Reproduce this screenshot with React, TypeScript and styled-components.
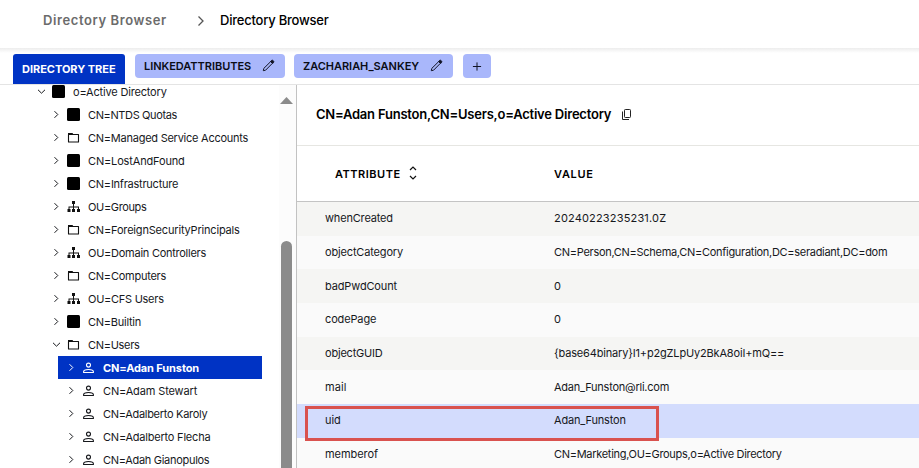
import React from 'react';
import styled, { createGlobalStyle } from 'styled-components';

const Global = createGlobalStyle`
  * { box-sizing: border-box; }
  body { margin: 0; background: #fff; overflow: hidden; }
`;

const Page = styled.div`
  width: 919px;
  height: 468px;
  display: flex;
  flex-direction: column;
  overflow: hidden;
  background: #fff;
  color: #16181c;
  font: 400 11px/16px Inter, "Liberation Sans", sans-serif;
`;

const Text = styled.span<{ $track?: number }>`
  white-space: nowrap;
  letter-spacing: ${p => p.$track ?? -0.2}px;
`;

const Header = styled.header`
  flex: none;
  height: 48px;
  padding: 0 0 8px 43px;
  display: flex;
  align-items: center;
`;

const Crumb = styled.a<{ $current?: boolean }>`
  width: ${p => (p.$current ? 'auto' : '154px')};
  font-size: 13px;
  font-weight: ${p => (p.$current ? 500 : 600)};
  color: ${p => (p.$current ? '#000' : '#6b6b6b')};
  letter-spacing: ${p => (p.$current ? -0.22 : 0.6)}px;
  white-space: nowrap;
`;

const CrumbArrow = styled.svg`
  width: 8px;
  height: 12px;
  margin: 2px 15px 0 0;
`;

const TabBar = styled.nav`
  flex: none;
  height: 37px;
  padding: 6px 0 0 13px;
  display: flex;
  align-items: flex-start;
  background: linear-gradient(#ededed, #fff 5px);
  border-bottom: 1px solid #e4e4e4;
`;

const Tab = styled.button<{ $active?: boolean; $width: number; $gap?: number }>`
  width: ${p => p.$width}px;
  height: ${p => (p.$active ? 30 : 24)}px;
  margin: 0 ${p => p.$gap ?? 9}px 0 0;
  padding: 0 9px;
  border: 0;
  border-radius: ${p => (p.$active ? '3px 3px 0 0' : '4px')};
  background: ${p => (p.$active ? '#0033c4' : '#a9b7fb')};
  color: ${p => (p.$active ? '#fff' : '#0b0d16')};
  display: flex;
  align-items: center;
  justify-content: space-between;
  font: ${p => (p.$active ? 700 : 600)} 11px/24px Inter, "Liberation Sans", sans-serif;
`;

const PencilSvg = styled.svg`
  width: 13px;
  height: 13px;
  margin: 0 1px 1px 0;
`;

const PlusSvg = styled.svg`
  width: 11px;
  height: 11px;
  margin: 0 auto;
`;

const Body = styled.main`
  flex: 1;
  min-height: 0;
  display: flex;
`;

const TreePane = styled.aside`
  flex: none;
  width: 297px;
  display: flex;
  overflow: hidden;
  border-right: 1px solid #c2c2c2;
`;

const TreeList = styled.div`
  flex: 1;
  margin-top: -5px;
`;

const TreeRow = styled.div<{ $depth: number; $selected?: boolean }>`
  width: ${p => 262 - (28 + p.$depth * 15)}px;
  height: 23px;
  margin-left: ${p => 28 + p.$depth * 15}px;
  padding-left: 9px;
  display: flex;
  align-items: center;
  background: ${p => (p.$selected ? '#0033c4' : 'transparent')};
  color: ${p => (p.$selected ? '#fff' : '#16181c')};
  font-weight: ${p => (p.$selected ? 700 : 400)};
`;

const Chevron = styled.svg`
  flex: none;
  width: 9px;
  height: 9px;
  margin-right: 5px;
`;

const NodeIcon = styled.svg`
  flex: none;
  width: 15px;
  height: 15px;
  margin-right: 7px;
`;

const ScrollTrack = styled.div`
  width: 17px;
  padding: 12px 0 0 1px;
  background: #fcfcfc;
`;

const ScrollArrow = styled.svg`
  display: block;
  width: 13px;
  height: 7px;
`;

const ScrollThumb = styled.div`
  width: 11px;
  height: 260px;
  margin: 137px 0 0 1px;
  border-radius: 6px;
  background: #8b8b8b;
`;

const Detail = styled.section`
  flex: 1;
  min-width: 0;
  overflow: hidden;
`;

const EntryTitle = styled.h1`
  height: 61px;
  margin: 0;
  padding: 0 0 2px 19px;
  display: flex;
  align-items: center;
  gap: 11px;
  border-bottom: 1px solid #e6e6e2;
  font-size: 13px;
  font-weight: 600;
  color: #000;
`;

const CopySvg = styled.svg`
  width: 9px;
  height: 11px;
  margin-top: 1px;
`;

const ColumnHeads = styled.div`
  height: 56px;
  padding-left: 38px;
  display: grid;
  grid-template-columns: 219px 1fr;
  align-items: center;
  border-bottom: 1px solid #c4c4c4;
  font-weight: 600;
  color: #000;
`;

const Sortable = styled.div`
  display: flex;
  align-items: center;
  gap: 8px;
`;

const SortSvg = styled.svg`
  width: 8px;
  height: 14px;
  margin-bottom: 1px;
`;

const AttrRow = styled.div<{ $tone: 'odd' | 'even' | 'marked' }>`
  position: relative;
  height: 33.7px;
  padding: 0 0 1px 28px;
  display: grid;
  grid-template-columns: 229px 1fr;
  align-items: center;
  background: ${p => ({ odd: '#f5f5f3', even: '#fafafa', marked: '#d3dcfd' })[p.$tone]};
`;

const Highlight = styled.div`
  position: absolute;
  left: 8px;
  top: 2px;
  width: 354px;
  height: 35px;
  z-index: 1;
  border: 3px solid #d9524f;
`;

type Kind = 'box' | 'folder' | 'org' | 'user';

function Glyph({ kind }: { kind: Kind }) {
  return (
    <NodeIcon viewBox="0 0 15 15" fill="none" stroke="currentColor">
      {kind === 'box' && <rect x="1" y="1" width="13" height="13" rx="1.5" fill="#000" stroke="none" />}
      {kind === 'folder' && (
        <>
          <path d="M2.500 4.500h10v7.500h-10z" stroke="#111" strokeWidth="1.100" strokeLinejoin="round" />
          <path d="M2 3h4.500l1.200 1.800H2z" fill="#111" stroke="none" />
        </>
      )}
      {kind === 'org' && (
        <path
          d="M6 2h3v3H8v2.500h5V10h1v3h-3v-3h1V8.500H8V10h1v3H6v-3h1V8.500H3.500V10h1v3h-3v-3h1V7.500H7V5H6z"
          fill="#111"
          stroke="none"
        />
      )}
      {kind === 'user' && (
        <>
          <circle cx="7.500" cy="5.100" r="2" strokeWidth="1.100" />
          <path d="M2.600 12.500v-.7c0-1.500 2.300-2.300 4.900-2.300s4.900.8 4.900 2.300v.7z" strokeWidth="1.100" strokeLinejoin="round" />
        </>
      )}
    </NodeIcon>
  );
}

function Pencil() {
  return (
    <PencilSvg viewBox="0 0 13 13" fill="none" stroke="#111426" strokeLinejoin="round">
      <path d="M1.300 11.700l.5-2.300L8.700 2.600l1.700 1.700-6.800 6.900z" strokeWidth="1" />
      <path d="M8.600 2.400l1-1c.9-.9 2.900 1.100 2 2l-1 1z" fill="#111426" strokeWidth="1" />
    </PencilSvg>
  );
}

const nodes: { name: string; kind: Kind; depth: number; open?: boolean; selected?: boolean; track: number }[] = [
  { name: 'o=Active Directory', kind: 'box', depth: 0, open: true, track: -0.17 },
  { name: 'CN=NTDS Quotas', kind: 'box', depth: 1, track: -0.38 },
  { name: 'CN=Managed Service Accounts', kind: 'folder', depth: 1, track: -0.25 },
  { name: 'CN=LostAndFound', kind: 'box', depth: 1, track: -0.16 },
  { name: 'CN=Infrastructure', kind: 'box', depth: 1, track: -0.24 },
  { name: 'OU=Groups', kind: 'org', depth: 1, track: -0.36 },
  { name: 'CN=ForeignSecurityPrincipals', kind: 'folder', depth: 1, track: -0.18 },
  { name: 'OU=Domain Controllers', kind: 'org', depth: 1, track: -0.26 },
  { name: 'CN=Computers', kind: 'folder', depth: 1, track: -0.24 },
  { name: 'OU=CFS Users', kind: 'org', depth: 1, track: -0.27 },
  { name: 'CN=Builtin', kind: 'box', depth: 1, track: -0.26 },
  { name: 'CN=Users', kind: 'folder', depth: 1, open: true, track: -0.31 },
  { name: 'CN=Adan Funston', kind: 'user', depth: 2, selected: true, track: -0.1 },
  { name: 'CN=Adam Stewart', kind: 'user', depth: 2, track: -0.13 },
  { name: 'CN=Adalberto Karoly', kind: 'user', depth: 2, track: -0.29 },
  { name: 'CN=Adalberto Flecha', kind: 'user', depth: 2, track: -0.21 },
  { name: 'CN=Adah Gianopulos', kind: 'user', depth: 2, track: -0.29 },
];

const attributes: { name: string; value: string; track?: number; valueTrack?: number; marked?: boolean }[] = [
  { name: 'whenCreated', value: '20240223235231.0Z', track: -0.17, valueTrack: 0.17 },
  { name: 'objectCategory', value: 'CN=Person,CN=Schema,CN=Configuration,DC=seradiant,DC=dom', track: -0.16, valueTrack: -0.29 },
  { name: 'badPwdCount', value: '0', track: -0.14 },
  { name: 'codePage', value: '0', track: -0.14 },
  { name: 'objectGUID', value: '{base64binary}I1+p2gZLpUy2BkA8oiI+mQ==', track: -0.2, valueTrack: -0.17 },
  { name: 'mail', value: 'Adan_Funston@rli.com', track: 0.05, valueTrack: -0.24 },
  { name: 'uid', value: 'Adan_Funston', track: -0.1, valueTrack: -0.18, marked: true },
  { name: 'memberof', value: 'CN=Marketing,OU=Groups,o=Active Directory', track: -0.05, valueTrack: -0.3 },
];

const tone = (marked: boolean | undefined, index: number) =>
  marked ? 'marked' : index % 2 ? 'even' : 'odd';

export default function App() {
  return (
    <Page>
      <Global />
      <Header>
        <Crumb>Directory Browser</Crumb>
        <CrumbArrow viewBox="0 0 8 12" fill="none" stroke="#555" strokeWidth="1.3">
          <path d="M1.500 1.500L6 6 1.500 10.500" />
        </CrumbArrow>
        <Crumb $current>Directory Browser</Crumb>
      </Header>
      <TabBar>
        <Tab $active $width={112} $gap={10}><Text $track={-0.03}>DIRECTORY TREE</Text></Tab>
        <Tab $width={150}><Text $track={-0.03}>LINKEDATTRIBUTES</Text><Pencil /></Tab>
        <Tab $width={159} $gap={10}><Text $track={-0.02}>ZACHARIAH_SANKEY</Text><Pencil /></Tab>
        <Tab $width={28}>
          <PlusSvg viewBox="0 0 11 11" stroke="#111426" strokeWidth="1.1"><path d="M5.500 1v9M1 5.500h9" /></PlusSvg>
        </Tab>
      </TabBar>
      <Body>
        <TreePane>
          <TreeList>
            {nodes.map(n => (
              <TreeRow key={n.name} $depth={n.depth} $selected={n.selected}>
                <Chevron viewBox="0 0 9 9" fill="none" stroke="currentColor" strokeWidth="1">
                  <path d={n.open ? 'M1 2.800l3.500 3.400L8 2.800' : 'M2.500 1.200l3.300 3.300-3.300 3.300'} />
                </Chevron>
                <Glyph kind={n.kind} />
                <Text $track={n.track}>{n.name}</Text>
              </TreeRow>
            ))}
          </TreeList>
          <ScrollTrack>
            <ScrollArrow viewBox="0 0 13 7"><path d="M6.500 0L13 7H0z" fill="#8b8b8b" /></ScrollArrow>
            <ScrollThumb />
          </ScrollTrack>
        </TreePane>
        <Detail>
          <EntryTitle>
            <Text $track={-0.21}>CN=Adan Funston,CN=Users,o=Active Directory</Text>
            <CopySvg viewBox="0 0 9 11" fill="none" stroke="#222" strokeWidth="1">
              <rect x="2.500" y=".5" width="6" height="8" rx=".8" />
              <path d="M.5 2.500v8h6.500" />
            </CopySvg>
          </EntryTitle>
          <ColumnHeads>
            <Sortable>
              <Text $track={0.5}>ATTRIBUTE</Text>
              <SortSvg viewBox="0 0 8 14" fill="none" stroke="#111" strokeWidth="1.2">
                <path d="M1 4l3-3 3 3M1 10l3 3 3-3" />
              </SortSvg>
            </Sortable>
            <Text $track={0.72}>VALUE</Text>
          </ColumnHeads>
          {attributes.map((a, i) => (
            <AttrRow key={a.name} $tone={tone(a.marked, i)}>
              <Text $track={a.track}>{a.name}</Text>
              <Text $track={a.valueTrack}>{a.value}</Text>
              {a.marked && <Highlight />}
            </AttrRow>
          ))}
        </Detail>
      </Body>
    </Page>
  );
}
